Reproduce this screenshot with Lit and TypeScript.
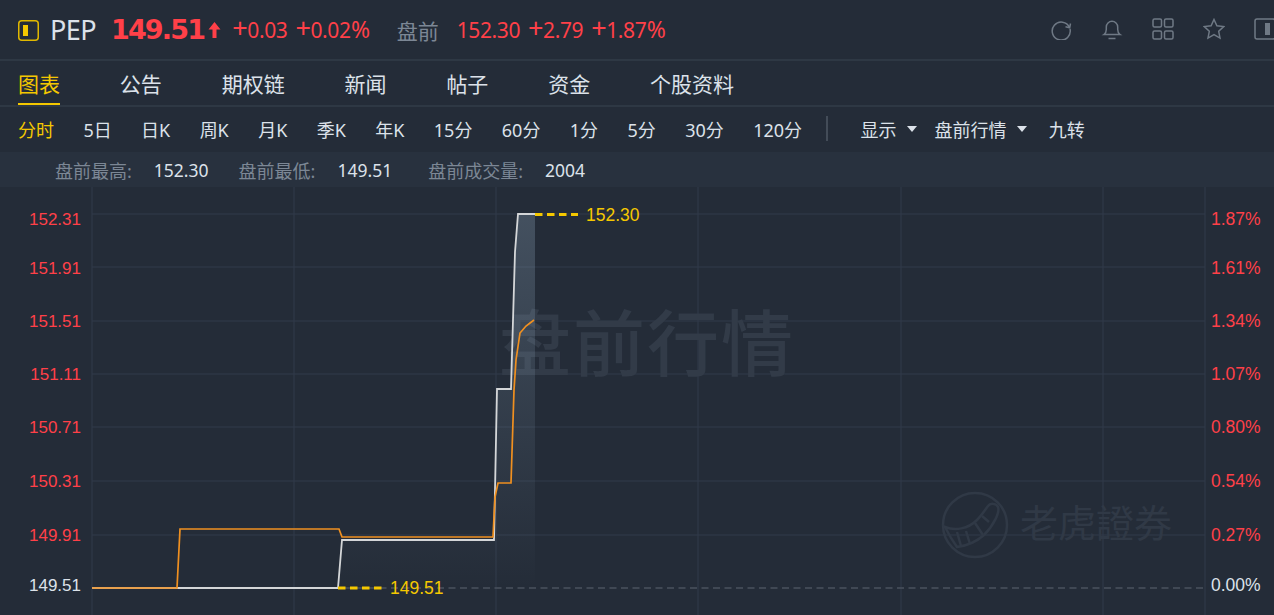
import { LitElement, css, html, svg } from "lit";
import { customElement } from "lit/decorators.js";

const TABS = ["图表", "公告", "期权链", "新闻", "帖子", "资金", "个股资料"];
const PERIODS = ["分时", "5日", "日K", "周K", "月K", "季K", "年K", "15分", "60分", "1分", "5分", "30分", "120分"];
const STATS = [
  ["盘前最高:", "152.30"],
  ["盘前最低:", "149.51"],
  ["盘前成交量:", "2004"],
];

const GRID_X = [92, 294, 496, 698, 901, 1103, 1205];
// the top label sits a little below its grid line, the rest are centred on it
const ROWS = [
  { y: 214, text: 225, price: "152.31", pct: "1.87%" },
  { y: 267, text: 274, price: "151.91", pct: "1.61%" },
  { y: 321, text: 327, price: "151.51", pct: "1.34%" },
  { y: 374, text: 380, price: "151.11", pct: "1.07%" },
  { y: 427, text: 433, price: "150.71", pct: "0.80%" },
  { y: 481, text: 487, price: "150.31", pct: "0.54%" },
  { y: 535, text: 541, price: "149.91", pct: "0.27%" },
];

const WHITE_LINE = "92,588 338,588 342,540 494,540 497,389 511,389 515,252 518,214 535,214";
const ORANGE_LINE = "92,588 177,588 180,529 339,529 342,537 493,537 495,497 498,483 511,483 514,390 516,360 520,333 526,326 534,320";

@customElement("app-root")
export class AppRoot extends LitElement {
  static styles = css`
    :host {
      display: block;
      width: 1274px;
      height: 615px;
      overflow: hidden;
      background: #242c38;
      color: #dce2ea;
      font-family: "Noto Sans", "Noto Sans CJK SC", sans-serif;
    }

    .header {
      display: flex;
      align-items: center;
      height: 59px;
      padding-left: 18px;
      border-bottom: 2px solid #2e3844;
      overflow: hidden;
      color: #ff4048;
      white-space: nowrap;
    }
    .badge {
      width: 21px;
      height: 21px;
      flex: none;
      margin-top: 2px;
    }
    .symbol {
      margin-left: 11px;
      font-size: 27px;
      color: #dce2ea;
      letter-spacing: -0.6px;
    }
    .last {
      margin-left: 15px;
      font: bold 27px "DejaVu Sans", sans-serif;
      letter-spacing: -1.8px;
    }
    .arrow {
      width: 13px;
      height: 18px;
      margin-left: 4px;
      flex: none;
    }
    .num {
      font-size: 21px;
      letter-spacing: -0.4px;
      margin-left: 8px;
    }
    .num.first {
      margin-left: 11px;
    }
    /* the original face has a wider plus and percent than Noto */
    .sign {
      font-size: 27px;
      line-height: 0;
    }
    .percent {
      font-size: 23px;
      line-height: 0;
      margin-left: 0.5px;
    }
    .pre {
      margin-left: 27px;
      margin-right: 18px;
      font-size: 21px;
      color: #7c8795;
    }
    .pre + .num {
      margin-left: 0;
    }
    .actions {
      display: flex;
      gap: 29px;
      margin-left: auto;
      margin-right: -2px;
      margin-bottom: 1px;
      flex: none;
    }
    .actions svg {
      display: block;
      width: 22px;
      height: 22px;
      fill: none;
      stroke: #6f7985;
      stroke-width: 1.5;
    }

    .tabs {
      display: flex;
      gap: 59.85px;
      height: 44px;
      padding-left: 18px;
      border-bottom: 2px solid #2e3844;
      font-size: 21px;
    }
    .tab {
      line-height: 46px;
      height: 44px;
      box-sizing: border-box;
    }
    .tab.on {
      color: #f5c800;
      border-bottom: 2px solid #f5c800;
    }

    .toolbar {
      display: flex;
      align-items: center;
      gap: 29.4px;
      height: 43px;
      padding-left: 18px;
      padding-bottom: 2px;
      font-size: 18px;
    }
    .toolbar .on {
      color: #f5c800;
    }
    .sep {
      width: 2px;
      height: 25px;
      margin: 0 2.6px 0 -5px;
      background: #434c58;
    }
    .menus {
      display: flex;
      align-items: center;
      gap: 17px;
    }
    .menu {
      display: flex;
      align-items: center;
      gap: 11px;
    }
    .caret {
      width: 0;
      height: 0;
      border: 5.5px solid transparent;
      border-top: 6px solid #dce2ea;
      border-bottom: 0;
    }
    .plain {
      margin-left: -8px;
    }

    .stats {
      display: flex;
      align-items: center;
      height: 35px;
      padding-left: 55px;
      background: #28313e;
      font-size: 17.5px;
    }
    .stat {
      display: flex;
      align-items: center;
      gap: 22px;
      margin-right: 30px;
    }
    .stat:nth-child(2) {
      margin-right: 36px;
    }
    .stat-label {
      color: #7c8795;
      font-size: 18px;
    }

    .chart {
      display: block;
      width: 1274px;
      height: 428px;
    }
    .grid {
      stroke: #303b4a;
      stroke-width: 1;
    }
    .axis {
      font: 17px "Liberation Sans", Arial, sans-serif;
      fill: #ff4048;
    }
    .axis.right {
      font-size: 17.5px;
    }
    .axis.flat {
      fill: #dce2ea;
    }
    .tag {
      font: 17.5px "Liberation Sans", Arial, sans-serif;
      fill: #f5c800;
    }
    .mark {
      font-family: "Noto Sans CJK SC", sans-serif;
      fill: #303946;
    }
    .mark.big {
      font-size: 72px;
      font-weight: 500;
      letter-spacing: 2px;
      fill: #323b48;
    }
    .mark.small {
      font-size: 38px;
    }
  `;

  private num(value: string, first = false) {
    const signed = value.startsWith("+");
    const pct = value.endsWith("%");
    const digits = value.slice(signed ? 1 : 0, pct ? -1 : undefined);
    return html`<span class="num ${first ? "first" : ""}">${signed ? html`<span class="sign">+</span>` : ""}${digits}${pct
      ? html`<span class="percent">%</span>`
      : ""}</span>`;
  }

  private chart() {
    return svg`
      <defs>
        <linearGradient id="area" x1="0" y1="0" x2="0" y2="1">
          <stop offset="0" stop-color="#a8c4dc" stop-opacity="0.24"></stop>
          <stop offset="1" stop-color="#a8c4dc" stop-opacity="0"></stop>
        </linearGradient>
      </defs>
      ${GRID_X.map((x) => svg`<line class="grid" x1=${x} x2=${x} y1="187" y2="615"></line>`)}
      ${ROWS.map(
        (r) => svg`
          <line class="grid" x1="92" x2="1205" y1=${r.y} y2=${r.y}></line>
          <text class="axis" x="81" y=${r.text} text-anchor="end">${r.price}</text>
          <text class="axis right" x="1211" y=${r.text}>${r.pct}</text>`
      )}
      <line x1="92" x2="1205" y1="588" y2="588" stroke="#4a525d" stroke-width="1.5" stroke-dasharray="7 4.500"></line>
      <text class="axis flat" x="81" y="591" text-anchor="end">149.51</text>
      <text class="axis right flat" x="1211" y="591">0.00%</text>

      <text class="mark big" x="499" y="370">盘前行情</text>
      <g fill="none" stroke="#303946" stroke-width="2.5">
        <circle cx="975" cy="525" r="32"></circle>
        <path d="M945 527C955 531 968 529 977 520C982 515 985 510 988 506C990 503 996 503 998 507C1000 512 994 525 984 535C975 543 965 546 957 547C952 540 948 533 945 527Z"></path>
        <path d="M957 532l4 14M966 531l4 13M975 523l8 12M982 516l7 6"></path>
      </g>
      <text class="mark small" x="1020" y="537">老虎證券</text>

      <polygon points="${WHITE_LINE} 535,588 92,588" fill="url(#area)"></polygon>
      <polyline points=${WHITE_LINE} fill="none" stroke="#d4d6d8" stroke-width="1.8"></polyline>
      <polyline points=${ORANGE_LINE} fill="none" stroke="#f09020" stroke-width="1.7"></polyline>

      <line x1="535" x2="578" y1="214.500" y2="214.500" stroke="#f5c800" stroke-width="3" stroke-dasharray="7.500 4.500"></line>
      <text class="tag" x="586" y="221">152.30</text>
      <line x1="338" x2="382" y1="588" y2="588" stroke="#f5c800" stroke-width="3" stroke-dasharray="7.500 4.500"></line>
      <text class="tag" x="390" y="594">149.51</text>
    `;
  }

  render() {
    return html`
      <div class="header">
        <svg class="badge" viewBox="0 0 21 21">
          <rect x="0.75" y="0.75" width="19.5" height="19.5" rx="3" fill="none" stroke="#e0b800" stroke-width="1.5"></rect>
          <rect x="5" y="5" width="5" height="11" fill="#f5c800"></rect>
        </svg>
        <span class="symbol">PEP</span>
        <span class="last">149.51</span>
        <svg class="arrow" viewBox="0 0 13 18">
          <path d="M6.500 1 12.500 8.500H8.500V17H4.500V8.500H0.500Z" fill="#ff4048"></path>
        </svg>
        ${this.num("+0.03", true)}
        ${this.num("+0.02%")}
        <span class="pre">盘前</span>
        ${this.num("152.30")}
        ${this.num("+2.79")}
        ${this.num("+1.87%")}
        <div class="actions">
          <svg viewBox="0 0 22 22"><path d="M19.500 9.500A9 9 0 1 0 20 11M20.500 5.500l-.8 4.300-4.200-1"></path></svg>
          <svg viewBox="0 0 22 22"><path d="M3 16.500c1.500-1 2.300-2.500 2.300-5V9a5.700 5.700 0 0 1 11.400 0v2.500c0 2.500.8 4 2.300 5zM7.500 20.500h7"></path></svg>
          <svg viewBox="0 0 22 22">
            <rect x="1" y="1" width="8.500" height="8" rx="1.500"></rect>
            <rect x="12.500" y="1" width="8.500" height="8" rx="1.500"></rect>
            <rect x="1" y="13" width="8.500" height="8" rx="1.500"></rect>
            <rect x="12.500" y="13" width="8.500" height="8" rx="1.500"></rect>
          </svg>
          <svg viewBox="0 0 22 22"><path d="M11 1.500l2.900 6.300 6.800.8-5 4.700 1.300 6.800-6-3.400-6 3.400 1.300-6.800-5-4.700 6.800-.8z"></path></svg>
          <svg viewBox="0 0 22 22">
            <rect x="1" y="1" width="20" height="20" rx="2"></rect>
            <rect x="11" y="5" width="5" height="12" fill="#6f7985" stroke="none"></rect>
          </svg>
        </div>
      </div>

      <div class="tabs">
        ${TABS.map((t, i) => html`<div class="tab ${i === 0 ? "on" : ""}">${t}</div>`)}
      </div>

      <div class="toolbar">
        ${PERIODS.map((p, i) => html`<span class=${i === 0 ? "on" : ""}>${p}</span>`)}
        <span class="sep"></span>
        <div class="menus">
          <span class="menu">显示<i class="caret"></i></span>
          <span class="menu">盘前行情<i class="caret"></i></span>
        </div>
        <span class="plain">九转</span>
      </div>

      <div class="stats">
        ${STATS.map(
          ([k, v]) => html`<div class="stat"><span class="stat-label">${k}</span><span>${v}</span></div>`
        )}
      </div>

      <svg class="chart" viewBox="0 187 1274 428">${this.chart()}</svg>
    `;
  }
}
